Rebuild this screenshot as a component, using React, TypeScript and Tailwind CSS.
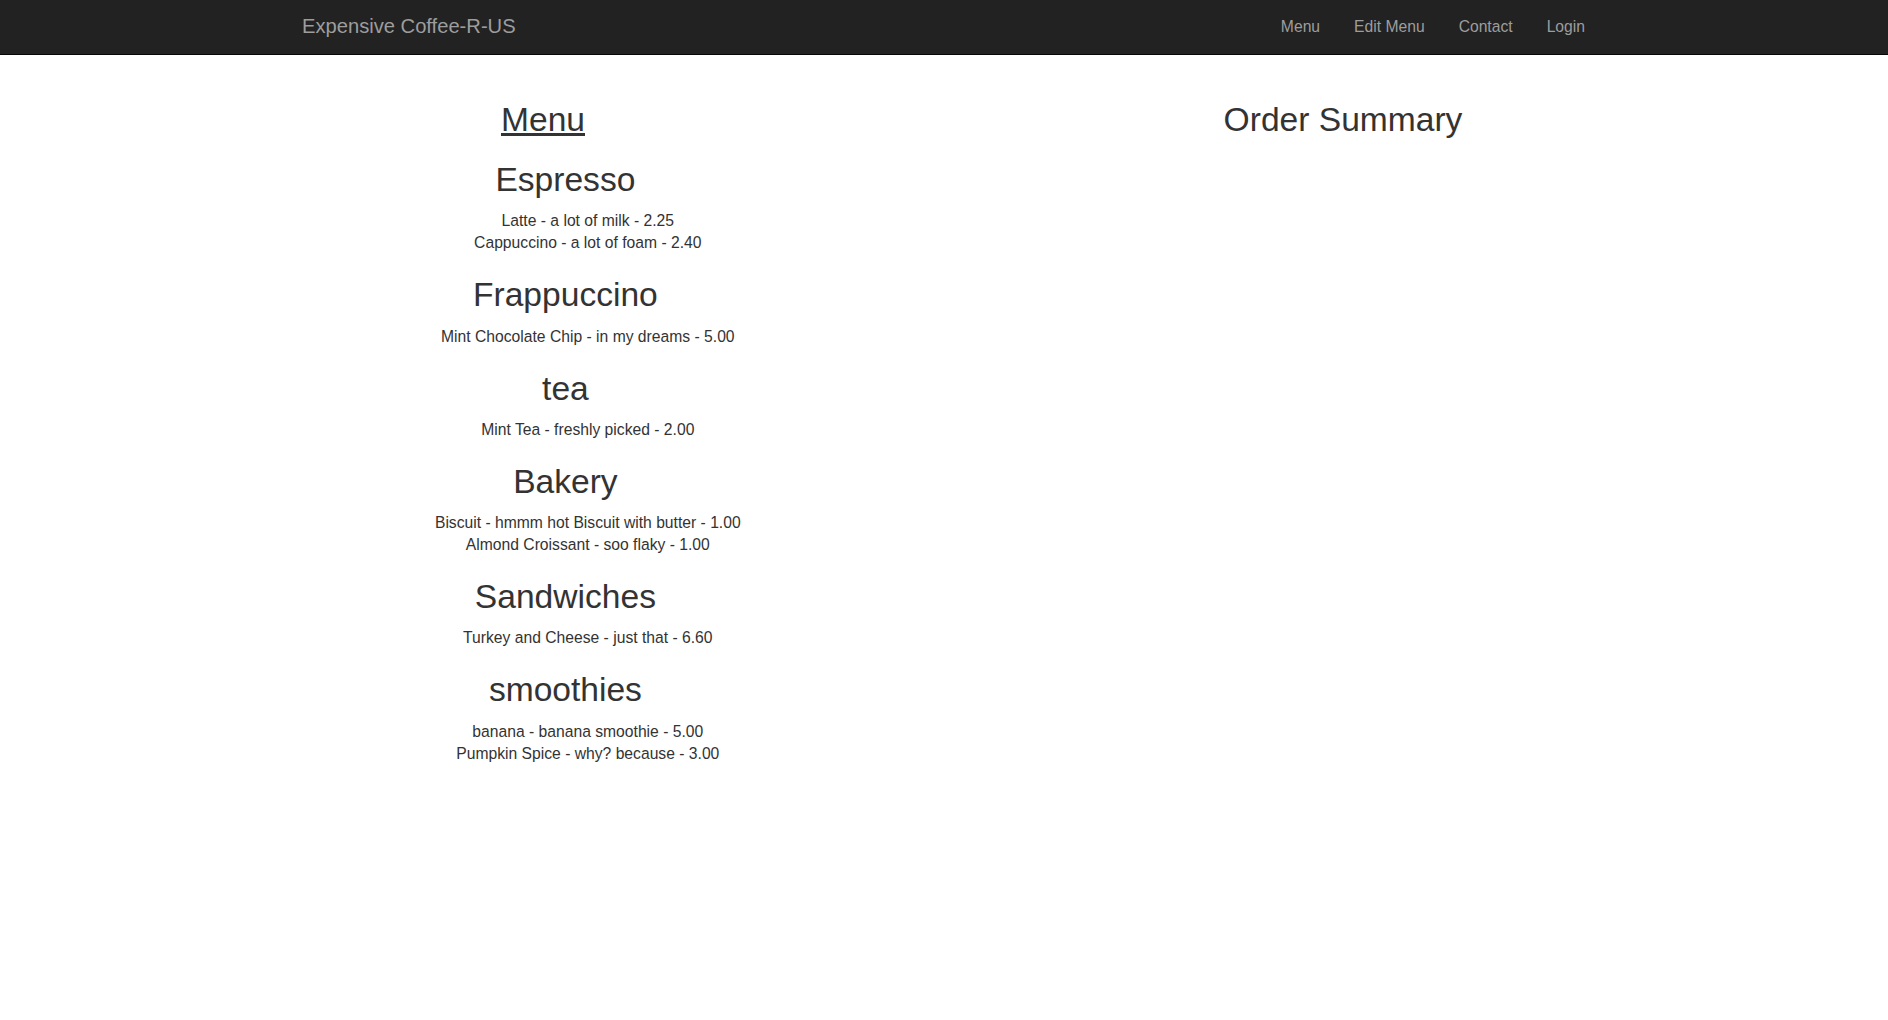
const menu = [
  {
    name: 'Espresso',
    items: ['Latte - a lot of milk - 2.25', 'Cappuccino - a lot of foam - 2.40'],
  },
  { name: 'Frappuccino', items: ['Mint Chocolate Chip - in my dreams - 5.00'] },
  { name: 'tea', items: ['Mint Tea - freshly picked - 2.00'] },
  {
    name: 'Bakery',
    items: ['Biscuit - hmmm hot Biscuit with butter - 1.00', 'Almond Croissant - soo flaky - 1.00'],
  },
  { name: 'Sandwiches', items: ['Turkey and Cheese - just that - 6.60'] },
  {
    name: 'smoothies',
    items: ['banana - banana smoothie - 5.00', 'Pumpkin Spice - why? because - 3.00'],
  },
];

const links = ['Menu', 'Edit Menu', 'Contact', 'Login'];

export default function App() {
  return (
    <div className="min-h-screen bg-white text-[#333] font-['Liberation_Sans',Arial,sans-serif]">
      <nav className="h-[55px] bg-[#222] border-b border-[#080808]">
        <div className="w-[1310px] mx-auto px-[13px] flex justify-between">
          <a href="#" className="pt-[15px] text-[20.16px] leading-[22px] text-[#9d9d9d]">
            Expensive Coffee-R-US
          </a>
          <ul className="flex gap-[34px] pt-[15px] pr-[1px]">
            {links.map((l) => (
              <li key={l}>
                <a href="#" className="text-[15.68px] leading-[22.4px] text-[#9d9d9d]">
                  {l}
                </a>
              </li>
            ))}
          </ul>
        </div>
      </nav>

      <main className="w-[1310px] mx-auto mt-[25px] flex gap-[292px]">
        <section className="w-[508px] text-center">
          <h2 className="mt-[22.4px] mb-[11.2px] text-[33.6px] leading-[1.1] font-normal underline">
            Menu
          </h2>
          <ul className="pl-[44.8px]">
            {menu.map((cat) => (
              <li key={cat.name}>
                <h2 className="mt-[22.6px] mb-[11.2px] text-[33.6px] leading-[1.1] font-normal">
                  {cat.name}
                </h2>
                <ul className="pl-[44.8px] mb-[11.2px] text-[15.68px] leading-[22.4px]">
                  {cat.items.map((item) => (
                    <li key={item}>{item}</li>
                  ))}
                </ul>
              </li>
            ))}
          </ul>
        </section>

        <section className="w-[508px] text-center">
          <h2 className="mt-[22.4px] mb-[11.2px] text-[33.6px] leading-[1.1] font-normal">
            Order Summary
          </h2>
        </section>
      </main>
    </div>
  );
}
